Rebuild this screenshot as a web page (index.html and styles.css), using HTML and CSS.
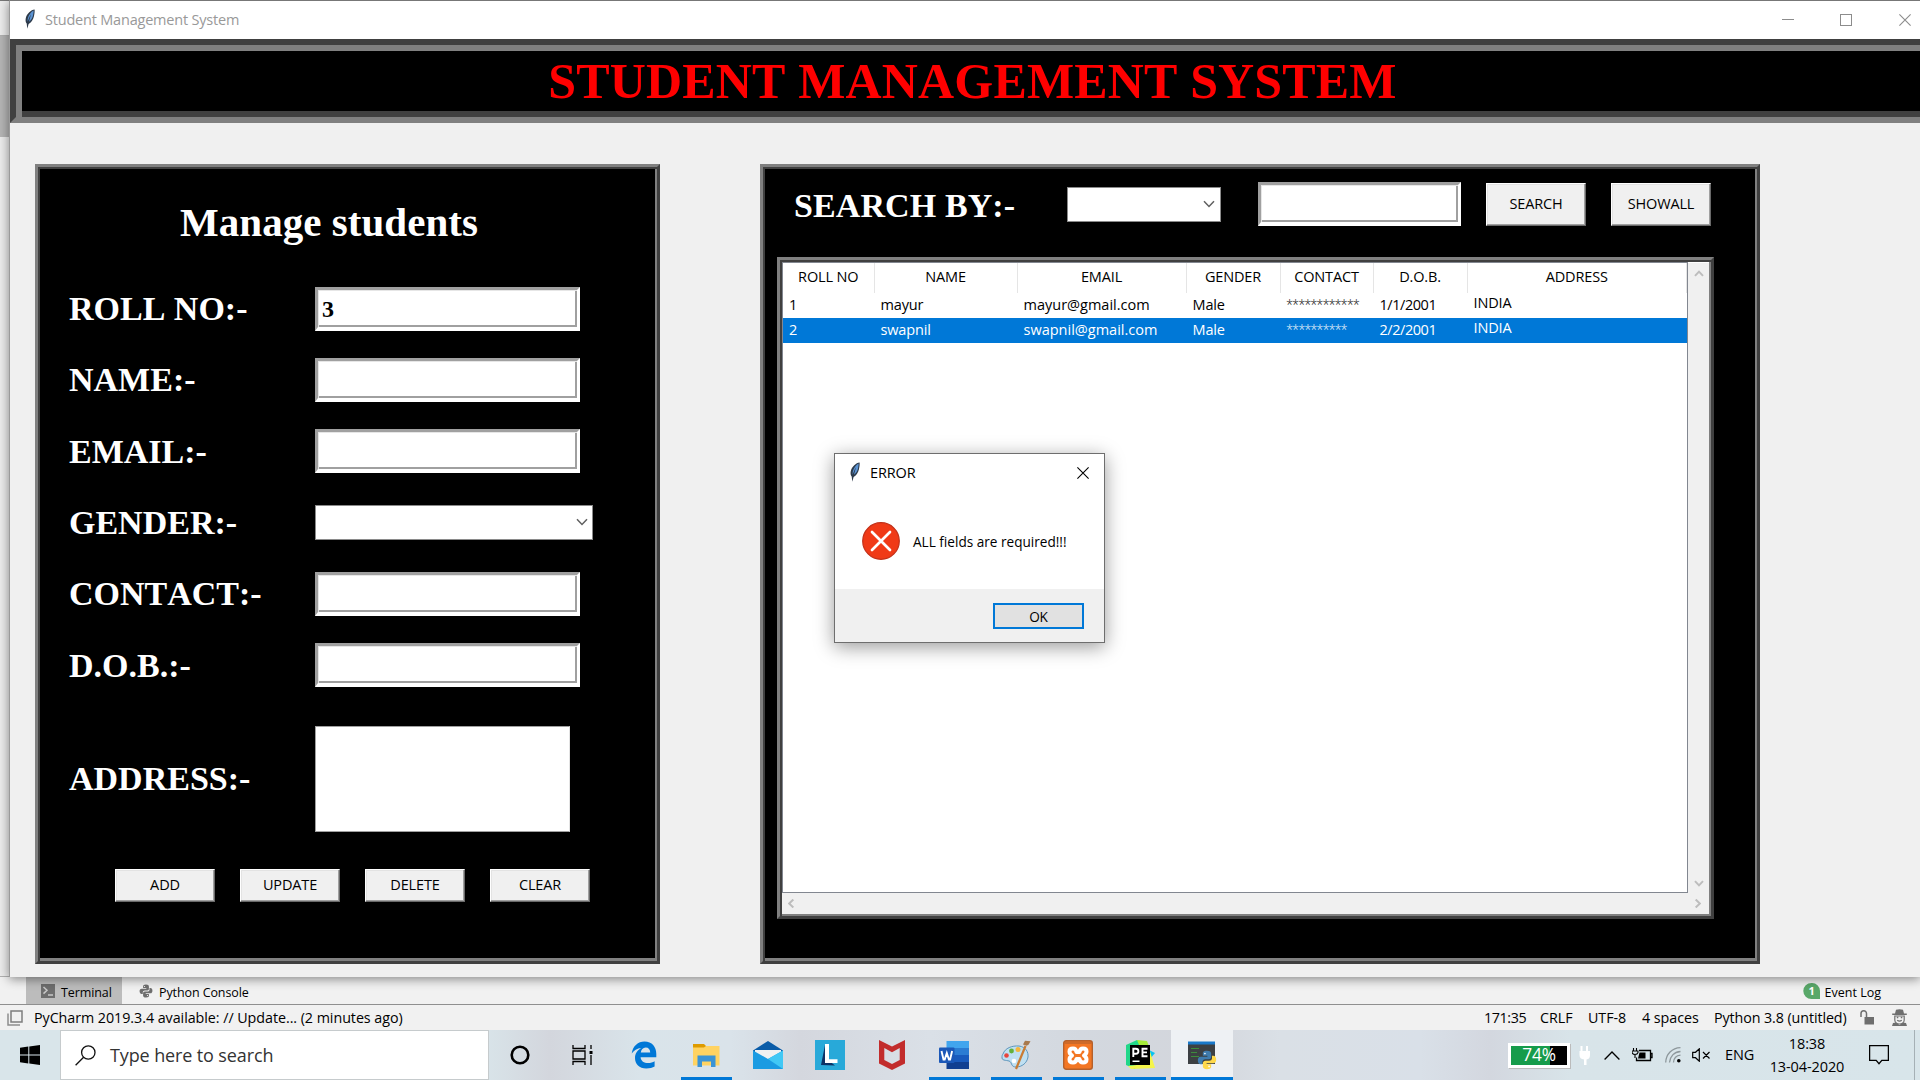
FILE: index.html
```
<!DOCTYPE html>
<html lang="en">
<head>
<meta charset="utf-8">
<title>Student Management System</title>
<link rel="stylesheet" href="styles.css">
</head>
<body>
<svg class="defs" width="0" height="0">
  <symbol id="feather" viewBox="0 0 12 20">
    <path d="M10.6.5C7 .8 3 4.500 1.800 9c-.5 2.500-.2 4.200.9 5.500l.6 5.300 1.300-4.800c2.500-1.200 4.600-4.300 5.300-7.500.6-2.700.9-5 .7-7z" fill="#2d3a4a"/>
    <path d="M9.600 1.600C7 3 4.600 6 3.800 9.500l-.3 3.300c1.200-2 1.700-5 3.500-7.500-.6 2.700-1.400 5-2 7.500C7 11.500 8.500 9 9 6.500c.4-2 .7-3.500.6-4.900z" fill="#5b93d3"/>
  </symbol>
  <symbol id="chev" viewBox="0 0 12 8"><path d="M1 1.200 6 6.500 11 1.200" fill="none" stroke="currentColor" stroke-width="1.500"/></symbol>
  <symbol id="chevbold" viewBox="0 0 12 8"><path d="M1.200 1.200 6 6.200 10.800 1.200" fill="none" stroke="currentColor" stroke-width="2.400"/></symbol>
  <symbol id="cross" viewBox="0 0 12 12"><path d="M.4.4 11.600 11.600M11.600.4.4 11.600" fill="none" stroke="currentColor" stroke-width="1.100"/></symbol>
  <symbol id="python" viewBox="0 0 24 24">
    <path d="M12 1C7.500 1 7 2.800 7 4.500V7h5.500v1H4.500C2 8 1 10 1 12.500S2.200 17 4.500 17H6.500v-2.500C6.500 12.500 8 11 10 11h4.500C16 11 17 9.800 17 8V4.500C17 2.500 15.500 1 12 1z" class="py-a"/>
    <path d="M12 23c4.500 0 5-1.800 5-3.500V17h-5.500v-1h8c2.500 0 3.500-2 3.500-4.500S21.800 7 19.500 7H18v3c0 2-1.500 3-3.500 3H10c-1.500 0-3 1.200-3 3v3.500C7 21.500 8.500 23 12 23z" class="py-b"/>
    <circle cx="9.500" cy="4.300" r="1" fill="#fff"/><circle cx="14.500" cy="19.700" r="1" fill="#fff"/>
  </symbol>
</svg>

<div class="stage">
  <div class="ide-edge"><i class="edge-top"></i><i class="edge-bar"></i></div>
  <main class="window">
    <header class="titlebar">
      <svg class="feather"><use href="#feather"/></svg>
      <span class="title">Student Management System</span>
      <svg class="wc" viewBox="0 0 12 12"><path d="M0 5.500h12" stroke="#8c8c8c"/></svg>
      <svg class="wc" viewBox="0 0 12 12"><rect x=".5" y=".5" width="11" height="11" fill="none" stroke="#8c8c8c"/></svg>
      <svg class="wc last"><use href="#cross"/></svg>
    </header>
    <div class="banner"><h1>STUDENT MANAGEMENT SYSTEM</h1></div>
    <div class="content">
      <section class="panel manage">
        <h2>Manage students</h2>
        <div class="row"><label>ROLL NO:-</label><div class="entry">3</div></div>
        <div class="row"><label>NAME:-</label><div class="entry"></div></div>
        <div class="row"><label>EMAIL:-</label><div class="entry"></div></div>
        <div class="row"><label>GENDER:-</label><div class="combo wide"><svg><use href="#chev"/></svg></div></div>
        <div class="row"><label>CONTACT:-</label><div class="entry"></div></div>
        <div class="row"><label>D.O.B.:-</label><div class="entry"></div></div>
        <div class="row address"><label>ADDRESS:-</label><div class="textbox"></div></div>
        <div class="actions">
          <button>ADD</button><button>UPDATE</button><button>DELETE</button><button>CLEAR</button>
        </div>
      </section>
      <section class="panel details">
        <div class="searchbar">
          <label>SEARCH BY:-</label>
          <div class="combo"><svg><use href="#chev"/></svg></div>
          <div class="entry find"></div>
          <button class="tall">SEARCH</button><button class="tall">SHOWALL</button>
        </div>
        <div class="tableframe">
          <div class="tree">
            <div class="tr head"><span>ROLL NO</span><span>NAME</span><span>EMAIL</span><span>GENDER</span><span>CONTACT</span><span>D.O.B.</span><span>ADDRESS</span></div>
            <div class="tr"><span>1</span><span>mayur</span><span class="mail">mayur@gmail.com</span><span>Male</span><span class="stars">************</span><span class="date">1/1/2001</span><span class="addr">INDIA</span></div>
            <div class="tr sel"><span>2</span><span>swapnil</span><span class="mail">swapnil@gmail.com</span><span>Male</span><span class="stars">**********</span><span class="date">2/2/2001</span><span class="addr">INDIA</span></div>
          </div>
          <div class="vscroll"><svg class="up"><use href="#chevbold"/></svg><svg><use href="#chevbold"/></svg></div>
          <div class="hscroll"><svg class="left"><use href="#chevbold"/></svg><svg class="right"><use href="#chevbold"/></svg></div>
        </div>
      </section>
    </div>
  </main>
</div>

<div class="toolstrip">
  <div class="tab active"><svg class="i14" viewBox="0 0 14 14"><path d="M0 0h14v14H0z" fill="#6e6e6e"/><path d="M2.500 3l3.500 3.300L2.500 9.600M7 11h5" fill="none" stroke="#c8c8c8" stroke-width="1.500"/></svg><span>Terminal</span></div>
  <div class="tab py"><svg class="i14 gray"><use href="#python"/></svg><span>Python Console</span></div>
  <div class="tab log"><svg class="bubble" viewBox="0 0 17 16"><path d="M8.500 0A8.200 8 0 0 1 17 8v8H8.500A8.200 8 0 0 1 8.500 0z" fill="#59a869"/><text x="8.700" y="12" text-anchor="middle">1</text></svg><span>Event Log</span></div>
</div>
<div class="statusbar">
  <svg class="winicon" viewBox="0 0 16 16"><path d="M4 1h11v11H4z" fill="none" stroke="#7d7d7d" stroke-width="1.500"/><path d="M1 3.500v11.500h12" fill="none" stroke="#8d8d8d" stroke-width="1.500"/></svg>
  <span class="msg">PyCharm 2019.3.4 available: // Update... (2 minutes ago)</span>
  <span class="pos">171:35</span><span class="crlf">CRLF</span><span class="utf">UTF-8</span><span class="sp">4 spaces</span><span class="interp">Python 3.8 (untitled)</span>
  <svg class="lock" viewBox="0 0 14 15"><path d="M4.500 7h9.500v7.500H4.500z" fill="#6e6e6e"/><path d="M1 7V3.500a2.500 2.500 0 0 1 5.500 0V8" fill="none" stroke="#6e6e6e" stroke-width="1.500"/></svg>
  <svg class="hat" viewBox="0 0 15 17"><path d="M3 4.500 4 .8Q7.500-.3 11 .8l1 3.700h2.800V6H.2V4.500z" fill="#6e6e6e"/><path d="M2.800 7h9.400v4a4.700 4 0 0 1-9.400 0z" fill="none" stroke="#6e6e6e" stroke-width="1.200"/><path d="M4.800 8.500h1.500M8.800 8.500h1.500M5.200 11.300q2.300 1.700 4.600 0" stroke="#6e6e6e" stroke-width="1.300" fill="none"/><path d="M0 17l1-3 3-.5L7.500 16l3.500-2.500 3 .5 1 3z" fill="#6e6e6e"/></svg>
</div>

<footer class="taskbar">
  <div class="start"><svg viewBox="0 0 20 20"><path d="M0 2.800 8.300 1.600V9.600H0zM9.300 1.400 20 0V9.600H9.300zM0 10.400h8.300v8L0 17.300zM9.300 10.400H20V20L9.300 18.500z"/></svg></div>
  <div class="searchbox"><svg viewBox="0 0 21 21"><circle cx="13.300" cy="7.500" r="6.700"/><path d="M8.600 12.300.6 20.300"/></svg><span>Type here to search</span></div>
  <div class="slot"><svg width="20" height="20" viewBox="0 0 20 20"><circle cx="10" cy="10" r="8.300" fill="none" stroke="#000" stroke-width="2.600"/></svg></div>
  <div class="slot"><svg width="21" height="20" viewBox="0 0 21 20"><path d="M1 0v3.500h12V0M1 20v-3.500h12V20M1 6h12v8H1zM19 0v4M19 10v10" fill="none" stroke="#000" stroke-width="1.300"/><path d="M17.500 6h3v3h-3z"/></svg></div>

  <div class="slot"><svg width="26" height="28" viewBox="0 0 26 28"><path d="M.7 12.400C2 5 7 .6 13.500.6 21 .6 25.300 6 25.300 13v3.200H9.600c.3 4 3.500 5.800 7.400 5.800 2.700 0 4.900-.7 6.600-1.800v5.400c-2 1.200-4.900 1.900-8.300 1.900C8.300 27.500 4 23 4 17c0-4.600 2.600-8.200 6.500-10C6 7.200 2.800 9.600.7 12.400zM9.800 11.400h9.400c0-3-1.600-5-4.500-5-2.800 0-4.500 2.200-4.900 5z" fill="#0078d7"/></svg></div>
  <div class="slot run"><svg width="28" height="24" viewBox="0 0 28 24"><path d="M1 1h11l2 2v2H1z" fill="#de9b00"/><path d="M1 4.500h11L14 3h13.500v19.500H1z" fill="#ffd362"/><path d="M5.500 24V12.500h18V24H19v-5.500h-9V24z" fill="#3b94d6"/></svg></div>
  <div class="slot"><svg width="30" height="28" viewBox="0 0 30 28"><path d="M0 9.500 15 0l15 9.500V12H0z" fill="#0a5ca8"/><path d="M2 9h26v14H2z" fill="#f1f1f1"/><path d="M0 9.500 15 18 30 9.500V28H0z" fill="#1b9be2"/><path d="M30 9.500V28L15 18z" fill="#41c8f5"/></svg></div>
  <div class="slot"><svg width="30" height="30" viewBox="0 0 30 30"><path d="M0 0h30v30H0z" fill="#28a9d9"/><path d="M10 5 6 25l14 .5L13 20z" fill="#0c3266"/><path d="M10 4h4v15.300h8.500V23H10z" fill="#fff"/></svg></div>
  <div class="slot"><svg width="28" height="30" viewBox="0 0 28 30"><path d="M1 0l13 6.500L27 0v23.500L14 30 1 23.500zM6.300 8v12L14 24l7.700-4V8L14 12.200z" fill="#c22c2c" fill-rule="evenodd"/></svg></div>
  <div class="slot run"><svg width="30" height="28" viewBox="0 0 30 28"><path d="M7.500 0H30v7H7.500z" fill="#41a5ee"/><path d="M7.500 7H30v7H7.500z" fill="#2b7cd3"/><path d="M7.500 14H30v7H7.500z" fill="#185abd"/><path d="M7.500 21H30v7H7.500z" fill="#103f91"/><rect y="6.500" width="15.500" height="15.500" rx="1" fill="#1b58b8"/><path d="M2.500 10l2 8.500h1.200L7.800 12l2.100 6.500h1.200l2-8.500" fill="none" stroke="#fff" stroke-width="1.900"/></svg></div>
  <div class="slot run"><svg width="30" height="30" viewBox="0 0 30 30"><path d="M2 14C4 8 11 5.500 18 6c7 1 9.500 6 9 11-1 6-6 10-12 10-5 0-4-4-6-5.500S1 21 1 18c0-2 0-3 1-4z" fill="#bfe0f2" stroke="#5d96bd" stroke-width="1"/><circle cx="5.500" cy="15.500" r="2.300" fill="#e8453c"/><circle cx="10.500" cy="11" r="2.400" fill="#63b13c"/><circle cx="17" cy="9.500" r="2.500" fill="#f4b63f"/><circle cx="13" cy="21" r="2.300" fill="#fff"/><path d="M15 29 24.500 6" stroke="#c97c34" stroke-width="2.200"/><path d="M22 4.500 24 .8l5.500.5-2 3.500-2 1z" fill="#a8794d"/></svg></div>
  <div class="slot run"><svg width="30" height="30" viewBox="0 0 30 30"><rect x=".7" y=".7" width="28.600" height="28.600" rx="2.500" fill="#f37623" stroke="#b5602b" stroke-width="1.400"/><path d="M1.500 1.500h27V4h-27z" fill="#b5602b" opacity=".6"/><path d="M10 8.500Q6.500 8.500 6.500 11.500Q6.500 14 9 15.500Q6.500 17 6.500 19.500Q6.500 22.500 10 22.500Q13 22.500 13.500 19h3Q17 22.500 20 22.500Q23.500 22.500 23.500 19.500Q23.500 17 21 15.500Q23.500 14 23.500 11.500Q23.500 8.500 20 8.500Q17 8.500 16.500 12h-3Q13 8.500 10 8.500z" fill="#f37623" stroke="#fff" stroke-width="4" stroke-linejoin="round"/></svg></div>
  <div class="slot run"><svg width="30" height="30" viewBox="0 0 30 30"><path d="M1 5 12 0l7 4-9 25-9-4z" fill="#21d789"/><path d="M12 0l10 1 3 8-8 3z" fill="#a6ed3a"/><path d="M22 9l8 4-5 6z" fill="#07c3f2"/><path d="M24 8 30 28 6 29l-3-3 18-2z" fill="#f5f54a"/><path d="M5 5h20v20H5z" fill="#000"/><path d="M8.300 17V8.700h2.600a2.500 2.500 0 0 1 0 5H8.300M22.500 8.700h-5v7.500h5M17.500 12.400h4.500" fill="none" stroke="#fff" stroke-width="1.900"/><path d="M7.500 20.500h7V22h-7z" fill="#fff"/></svg></div>
  <div class="slot run focus"><svg width="29" height="30" viewBox="0 0 29 30"><path d="M0 2h27v22H0z" fill="#3c4043"/><path d="M0 1.500h27v3H0z" fill="#1979ca"/><path d="M3 8.500h8M3 12.500h6M3 16.500h8" stroke="#3c8c3c" stroke-width="1.200"/><svg class="pycolor" x="9" y="10" width="20" height="20"><use href="#python"/></svg></svg></div>

  <div class="tray">
    <div class="battery"><div class="cell"><b>74%</b></div></div>
    <svg class="plug" viewBox="0 0 12 19"><path d="M2.500 0v6M8 0v6" stroke="#fff" stroke-width="2"/><path d="M.5 5h10.500v4q0 4-3.500 4.500V19H5v-5.500Q.5 13 .5 9z" fill="#fff"/></svg>
    <svg class="chevup" viewBox="0 0 16 9"><path d="M.6 8.500 8 1l7.400 7.500" fill="none" stroke="#000" stroke-width="1.300"/></svg>
    <svg class="bat2" viewBox="0 0 21 15"><path d="M7 2.500h11.500v10H4.500V9.500M18.500 5.500H20v4h-1.500" fill="none" stroke="#000" stroke-width="1.300"/><path d="M7.500 4.500h6v6h-7.500z"/><path d="M1.500 0v3M4.500 0v3M0 3h6v1.500Q5.500 6.500 3 6.500T0 4.500zM3 6v4" fill="none" stroke="#000" stroke-width="1.100"/></svg>
    <svg class="wifi" viewBox="0 0 16 16"><g fill="none" stroke="#8d979b" stroke-width="1.300"><path d="M.7 15.500C1 7 7 1 15.500.7"/><path d="M4.500 15.500C5 9.500 9 5 15.500 4.500"/><path d="M8.500 15.500c.3-4 3-7 7-7.300"/></g><circle cx="13.800" cy="13.800" r="1.800"/></svg>
    <svg class="vol" viewBox="0 0 19 14"><path d="M.7 4.300h2.800L7.300.8v12.400L3.500 9.700H.7zM11 4l6.500 6.500M17.500 4 11 10.500" fill="none" stroke="#000" stroke-width="1.200"/></svg>
    <span class="lang">ENG</span>
    <div class="clock"><span>18:38</span><span>13-04-2020</span></div>
    <svg class="note" viewBox="0 0 20 20"><path d="M.6.7h18.800v14.600h-6.600L10 18.700l-2.800-3.400H.6z" fill="none" stroke="#000" stroke-width="1.300"/></svg>
  </div>
</footer>

<div class="dialog">
  <div class="dtitle"><svg class="feather"><use href="#feather"/></svg><span>ERROR</span><svg class="dx"><use href="#cross"/></svg></div>
  <div class="dbody"><svg viewBox="0 0 38 38"><circle cx="19" cy="19" r="18.300" fill="#f03a17" stroke="#c2311a" stroke-width="1.200"/><path d="M10 10l18 18M28 10 10 28" stroke="#fff" stroke-width="2.700" stroke-linecap="round"/></svg><span>ALL fields are required!!!</span></div>
  <div class="dfoot"><div class="ok">OK</div></div>
</div>
</body>
</html>
```
FILE: styles.css
```
* { box-sizing: border-box; }
body {
  margin: 0; width: 1920px; height: 1080px; overflow: hidden; position: relative;
  display: flex; flex-direction: column; background: #f1f1f1; color: #000;
  font: 14.5px/20px "Open Sans", "Noto Sans", sans-serif; letter-spacing: -0.15px;
}
svg { display: block; flex: none; }
.defs { position: absolute; }
h1, h2 { margin: 0; }
.feather { width: 12px; height: 20px; }
button { font: inherit; letter-spacing: inherit; color: #000; }

/* desktop window */
.stage { height: 977px; flex: none; display: flex; position: relative; z-index: 1; }
.ide-edge { width: 9px; height: 977px; display: flex; flex-direction: column; background: #ececec; border-bottom: 1px solid #b0b0b0; }
.edge-top { height: 36px; border-top: 1px solid #777; border-bottom: 1px solid #b0b0b0; }
.edge-bar { height: 101px; background: #b5b5b5; }
.window { width: 1911px; height: 977px; background: #f0f0f0; border-top: 1px solid #777; border-left: 1px solid #9a9a9a; box-shadow: 0 2px 10px rgba(0,0,0,.45); }
.titlebar { height: 38px; background: #fff; display: flex; align-items: center; padding-left: 14px; color: #999; }
.title { margin: -1px auto 0 9px; letter-spacing: -0.2px; }
.titlebar .feather { margin-top: -2px; }
.wc { width: 12px; height: 12px; margin-right: 46px; }
.wc.last { margin-right: 9px; color: #8c8c8c; }
.wc:not(.last) { transform: translateX(-1px); }
.banner {
  height: 84px; background: #000; display: flex; align-items: center; justify-content: center; padding-left: 9px;
  border: 6px solid; border-right: 0; border-color: #404040 #404040 #808080 #404040;
  box-shadow: inset 6px 6px #808080, inset 0 -6px #404040;
}
h1 { font: bold 50px/56px "Liberation Serif", serif; letter-spacing: 0.15px; color: #f00; font-kerning: none; }
.content { display: flex; padding: 41px 0 0 25px; gap: 100px; }
.panel {
  height: 800px; background: #000; border: 3px solid; border-color: #808080 #404040 #404040 #808080;
  box-shadow: inset 2px 2px #404040, inset -2px -3px #808080;
}
.manage { width: 625px; padding-left: 31px; }
.details { width: 1000px; padding-left: 14px; }
h2 { font: bold 41px/46px "Liberation Serif", serif; color: #fff; letter-spacing: 0.05px; padding: 32px 0 0 111px; height: 106px; }
.row { height: 71.300px; display: flex; align-items: center; }
label { font: bold 34px/38px "Liberation Serif", serif; letter-spacing: 0; color: #fff; width: 246px; flex: none; font-kerning: none; padding-top: 1px; }
.entry {
  width: 265px; height: 44px; background: #fff; border: 3px solid; border-bottom-width: 4px;
  border-color: #a0a0a0 #fff #fff #a0a0a0; box-shadow: inset 1px 1px #e6e6e6, inset -2px -2px #a0a0a0;
  font: bold 24px/36px "Liberation Serif", serif; padding: 1px 0 0 4px;
}
.combo { width: 154px; height: 35px; background: #fff; border: 1px solid #8a8a8a; display: flex; align-items: center; justify-content: flex-end; padding-right: 5px; color: #606060; }
.combo.wide { width: 278px; margin-top: -1px; padding-right: 4px; }
.combo svg { width: 12px; height: 8px; }
.address { height: 156px; }
.address label { padding-top: 0; }
.textbox { width: 255px; height: 106px; background: #fff; border: 1px solid #a0a0a0; border-color: #a0a0a0 #e3e3e3 #a0a0a0 #a0a0a0; }
.actions { display: flex; gap: 25px; padding: 12px 0 0 46px; }
button {
  width: 100px; height: 33px; padding: 0; background: #f0f0f0; border: 1px solid; border-color: #fff #696969 #696969 #fff;
  box-shadow: inset -1px -1px #a0a0a0, inset 1px 1px #e3e3e3;
}
.searchbar { display: flex; align-items: center; height: 88px; padding: 0 0 14px 17px; }
.searchbar label { width: 273px; padding-top: 3px; letter-spacing: 0.1px; }
.find { width: 203px; margin: 0 25px 0 37px; }
.tall { height: 43px; margin-right: 25px; }
.tableframe {
  width: 937px; height: 662px; margin-top: 2px; background: #f0f0f0; padding: 2px;
  border: 3px solid; border-color: #808080 #404040 #404040 #808080;
  box-shadow: inset 2px 2px #404040, inset -2px -2px #808080;
  display: grid; grid-template: 631px 1fr / 906px 1fr;
}
.tree { background: #fff; border: 1px solid #828790; }
.tr { display: grid; grid-template-columns: 91.500px 143px 169px 94px 93px 94px 1fr; height: 25px; align-items: center; }
.tr span { padding-left: 6px; margin-top: -1px; }
.tr.head { height: 30px; }
.head span { text-align: center; padding: 0; margin: 0; height: 30px; line-height: 28px; border-right: 1px solid #e5e5e5; }
.sel { background: #0078d7; color: #fff; }
.tr .mail { letter-spacing: 0; }
.tr .date { letter-spacing: -0.45px; }
.tr .addr { margin-top: -5px; }
.tr .stars { font-family: Roboto, sans-serif; font-weight: 300; font-size: 14.300px; letter-spacing: 0; opacity: .8; }
.vscroll { display: flex; flex-direction: column; justify-content: space-between; align-items: center; padding: 7px 0 6px; color: #bdbdbd; border-top: 1px solid #fff; }
.vscroll svg, .hscroll svg { width: 10px; height: 7px; }
.up { transform: rotate(180deg); }
.hscroll { grid-column: 1 / 3; display: flex; justify-content: space-between; align-items: center; padding: 0 6px 1px 4px; color: #bdbdbd; }
.left { transform: rotate(90deg); }
.right { transform: rotate(-90deg); }

/* editor strips */
.toolstrip { height: 28px; flex: none; display: flex; border-bottom: 1px solid #8f8f8f; padding-left: 26px; font-size: 12.500px; letter-spacing: -0.1px; }
.tab { display: flex; align-items: center; gap: 6px; padding-top: 5px; }
.tab.active { width: 96px; background: #bcbcbc; padding-left: 15px; }
.tab.py { margin-left: 17px; }
.tab.log { margin-left: auto; margin-right: 39px; gap: 5px; letter-spacing: 0; }
.i14 { width: 14px; height: 14px; margin-top: -4px; }
.gray { fill: #6e6e6e; --tail: #6e6e6e; }
.bubble { width: 17px; height: 16px; margin-top: -4px; }
.bubble text { font: bold 11px "Open Sans", sans-serif; fill: #fff; }
.statusbar { height: 25px; flex: none; display: flex; align-items: center; padding-left: 7px; font-size: 14.300px; letter-spacing: -0.05px; }
.winicon { width: 16px; height: 16px; margin-right: 11px; }
.msg { width: 1450px; }
.pos { width: 56px; letter-spacing: -0.4px; }
.crlf { width: 48px; }
.utf { width: 54px; }
.sp { width: 72px; }
.interp { width: 146px; white-space: nowrap; letter-spacing: -0.1px; }
.lock { width: 14px; height: 15px; margin-right: 18px; }
.hat { width: 15px; height: 17px; }

/* taskbar */
.taskbar { height: 50px; flex: none; display: flex; background: linear-gradient(90deg, #d9e5ea 0, #d9e5ea 480px, #d3d6dd 550px, #d9e4ea 640px, #dae3ea 730px, #d4d7de 800px, #dae0e7 930px, #d3d8df 1080px, #d3d6dc 1200px, #dae0e6 1280px, #d9e0e8 1420px, #d3d7df 1490px, #d8e4e9 1570px, #d8e5ea 1920px); }
.start { width: 60px; display: flex; align-items: center; padding-left: 20px; }
.start svg { width: 20px; height: 20px; }
.searchbox { width: 429px; background: #fff; border: 1px solid #c6cbcd; display: flex; align-items: center; padding-left: 14px; font-size: 18px; letter-spacing: -0.12px; color: #333; }
.searchbox svg { width: 21px; height: 21px; margin-right: 14px; fill: none; stroke: #111; stroke-width: 1.300; }
.slot { width: 62px; display: flex; align-items: center; justify-content: center; }
.searchbox + .slot, .searchbox + .slot + .slot { width: 62px; }
.slot.run { background: linear-gradient(#0078d7, #0078d7) center bottom / 51px 3px no-repeat; }
.slot.focus { background: linear-gradient(#0078d7, #0078d7) center bottom / 62px 3px no-repeat #eef1f4; }
.py-a { fill: inherit; }
.py-b { fill: var(--tail); }
.pycolor { fill: #3f7cae; --tail: #ffd94a; }
.tray { flex: 1; display: flex; align-items: center; padding-left: 275px; }
.battery { width: 62px; height: 25px; border: 3px solid #fff; margin-right: 9px; box-shadow: 1px 1px #bbb; }
.cell { height: 19px; background: linear-gradient(90deg, #169c4b 39px, #000 39px); display: flex; justify-content: center; align-items: center; }
.cell b { font-weight: 400; font-size: 17.300px; color: #fff; }
.plug { width: 12px; height: 19px; margin-right: 13px; }
.chevup { width: 16px; height: 9px; margin-right: 12px; }
.bat2 { width: 21px; height: 15px; margin-right: 12px; }
.wifi { width: 16px; height: 16px; margin-right: 11px; }
.vol { width: 19px; height: 14px; margin-right: 14px; }
.lang { width: 43px; }
.clock { width: 78px; display: flex; flex-direction: column; align-items: center; line-height: 23px; margin-right: 23px; letter-spacing: -0.1px; }
.note { width: 20px; height: 20px; margin-right: 25px; }
.tray::after { content: ""; height: 50px; border-left: 1px solid #a5b0b5; }

/* error dialog */
.dialog { position: absolute; z-index: 5; left: 834px; top: 453px; width: 271px; height: 190px; background: #fff; border: 1px solid #6e6e6e; box-shadow: 0 4px 18px rgba(0,0,0,.4); }
.dtitle { height: 38px; display: flex; align-items: center; padding: 0 15px 0 14px; }
.dtitle .feather { margin-top: -3px; }
.dtitle span { margin: -1px auto 0 9px; }
.dx { width: 12px; height: 12px; }
.dbody { height: 97px; display: flex; align-items: center; padding-left: 27px; font-size: 13.600px; letter-spacing: 0; }
.dbody svg { width: 38px; height: 38px; margin-right: 13px; }
.dbody span { padding-top: 3px; }
.dfoot { height: 53px; background: #f0f0f0; display: flex; justify-content: flex-end; padding: 14px 20px 0 0; }
.ok { width: 91px; height: 26px; background: #e1e1e1; border: 2px solid #0078d7; text-align: center; line-height: 24px; font-size: 13.600px; }
```
